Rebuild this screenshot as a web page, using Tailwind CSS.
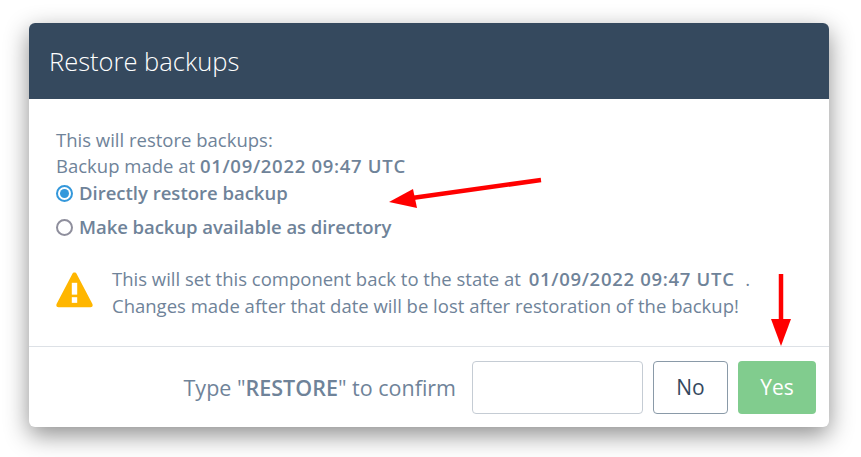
<!DOCTYPE html>
<html lang="en">
  <head>
    <meta charset="UTF-8" />
    <title>Restore backups</title>
    <script src="https://cdn.jsdelivr.net/npm/@tailwindcss/browser@4"></script>
  </head>
  <body class="bg-white h-[457px] overflow-hidden pl-[29px] pt-[23px] font-['Open_Sans','Lato',sans-serif] relative">
    <div class="w-[800px] h-[404px] bg-white rounded-[6px] shadow-[0_8px_24px_rgba(0,0,0,0.45)] flex flex-col overflow-hidden">
      <div class="h-[76px] bg-[#35495e] flex items-center px-[20px] shrink-0">
        <h1 class="text-[25.500px] font-light text-white">Restore backups</h1>
      </div>
      <div class="h-[247px] px-[27px] pt-[28px] text-[#6f8399] text-[18.500px] flex flex-col shrink-0">
        <p class="leading-[26px]">This will restore backups:</p>
        <p class="leading-[26px]">Backup made at <span class="font-semibold tracking-[0.700px]">01/09/2022 09:47 UTC</span></p>
        <label class="flex items-center gap-[6px] h-[28px] font-semibold">
          <span class="w-[17px] h-[17px] rounded-full border-2 border-[#3498db] flex items-center justify-center shrink-0">
            <span class="w-[9px] h-[9px] rounded-full bg-[#3498db]"></span>
          </span>
          Directly restore backup
        </label>
        <label class="flex items-center gap-[6px] h-[28px] mt-[6px] font-semibold tracking-[-0.050px]">
          <span class="w-[17px] h-[17px] rounded-full border-2 border-[#8f8f9d] shrink-0"></span>
          Make backup available as directory
        </label>
        <div class="flex items-start gap-[19px] mt-[24px]">
          <svg class="w-[37px] h-[36px] shrink-0 mt-[7px]" viewBox="0 0 37 35" preserveAspectRatio="none">
            <path fill="#ffb600" d="M18.5 0.5c1 0 1.7.5 2.2 1.400l15.600 29c.9 1.700.1 3.300-1.800 3.300H2.500C.6 34.200-.2 32.600.7 30.900l15.600-29c.5-.9 1.200-1.400 2.200-1.400z"/>
            <rect x="15.800" y="10.500" width="5.400" height="11.500" fill="#fff"/>
            <rect x="15.800" y="24.500" width="5.400" height="5.500" fill="#fff"/>
          </svg>
          <div class="leading-[27px]">
            <p>This will set this component back to the state at <span class="font-semibold tracking-[0.700px] ml-[3px]">01/09/2022 09:47 UTC</span> &nbsp;<span class="ml-[1px]">.</span></p>
            <p>Changes made after that date will be lost after restoration of the backup!</p>
          </div>
        </div>
      </div>
      <div class="flex-1 border-t border-[#dde1e6] flex items-start justify-end gap-[10px] pr-[13px] pt-[14px]">
        <span class="text-[21.500px] leading-[53px] text-[#6f8399] mr-[6px]">Type "<span class="font-semibold">RESTORE</span>" to confirm</span>
        <input type="text" class="w-[171px] h-[53px] border border-[#c5ccd4] rounded-[4px] bg-white" />
        <button class="w-[75px] h-[53px] border border-[#8a9aa8] rounded-[4px] bg-white text-[21px] text-[#35495e]">No</button>
        <button class="w-[78px] h-[53px] rounded-[4px] bg-[#81cc8e] text-[21px] text-white">Yes</button>
      </div>
    </div>
    <svg class="absolute left-0 top-0 pointer-events-none" width="861" height="457" viewBox="0 0 861 457">
      <line x1="541" y1="180" x2="412" y2="198" stroke="#ff0000" stroke-width="4.500"/>
      <polygon points="389,202 413,189 417,208" fill="#ff0000"/>
      <line x1="781" y1="274" x2="781" y2="322" stroke="#ff0000" stroke-width="4.500"/>
      <polygon points="771,319 791,319 781,346" fill="#ff0000"/>
    </svg>
  </body>
</html>
